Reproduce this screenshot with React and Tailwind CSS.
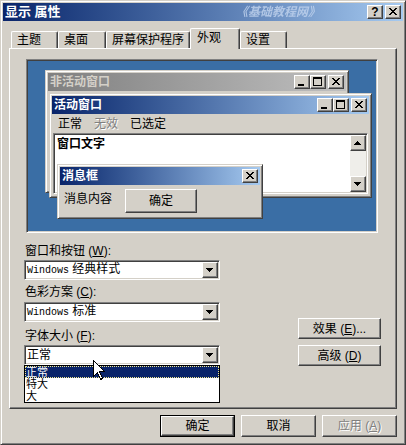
import React from "react";

const face = "bg-[#D4D0C8]";
const raised =
  "border border-t-white border-l-white border-r-[#404040] border-b-[#404040] shadow-[inset_-1px_-1px_0_#808080]";
const frame =
  "border border-t-[#D4D0C8] border-l-[#D4D0C8] border-r-[#404040] border-b-[#404040] shadow-[inset_1px_1px_0_#fff,inset_-1px_-1px_0_#808080]";
const sunken =
  "border border-t-[#808080] border-l-[#808080] border-r-white border-b-white shadow-[inset_1px_1px_0_#404040,inset_-1px_-1px_0_#D4D0C8]";

const xRows = [[0, 1, 6, 7], [1, 2, 5, 6], [2, 3, 4, 5], [3, 4], [2, 3, 4, 5], [1, 2, 5, 6], [0, 1, 6, 7]];

function Glyph({ type }) {
  if (type === "help")
    return <span className="font-['Liberation_Sans',sans-serif] font-bold text-[12px] leading-[12px] text-black">?</span>;
  if (type === "min")
    return (
      <svg width="14" height="12" shapeRendering="crispEdges">
        <rect x="3" y="8" width="6" height="2" fill="#000" />
      </svg>
    );
  if (type === "max")
    return (
      <svg width="14" height="12" shapeRendering="crispEdges">
        <rect x="2" y="1" width="9" height="2" fill="#000" />
        <rect x="2" y="1" width="1" height="9" fill="#000" />
        <rect x="10" y="1" width="1" height="9" fill="#000" />
        <rect x="2" y="9" width="9" height="1" fill="#000" />
      </svg>
    );
  if (type === "close")
    return (
      <svg width="14" height="12" shapeRendering="crispEdges">
        {xRows.map((cols, r) =>
          cols.map((c) => <rect key={r + "-" + c} x={3 + c} y={2 + r} width="1" height="1" fill="#000" />)
        )}
      </svg>
    );
  if (type === "up")
    return (
      <svg width="14" height="14" shapeRendering="crispEdges">
        <rect x="6" y="5" width="1" height="1" fill="#000" />
        <rect x="5" y="6" width="3" height="1" fill="#000" />
        <rect x="4" y="7" width="5" height="1" fill="#000" />
        <rect x="3" y="8" width="7" height="1" fill="#000" />
      </svg>
    );
  return (
    <svg width="14" height="14" shapeRendering="crispEdges">
      <rect x="3" y="5" width="7" height="1" fill="#000" />
      <rect x="4" y="6" width="5" height="1" fill="#000" />
      <rect x="5" y="7" width="3" height="1" fill="#000" />
      <rect x="6" y="8" width="1" height="1" fill="#000" />
    </svg>
  );
}

function CapBtn({ type }) {
  return (
    <div className={`w-[16px] h-[14px] ${face} ${raised} flex items-center justify-center`}>
      <Glyph type={type} />
    </div>
  );
}

function ArrowBtn({ type }) {
  return (
    <div className={`w-[16px] h-[16px] ${face} ${raised} flex items-center justify-center shrink-0`}>
      <Glyph type={type} />
    </div>
  );
}

function MiniWindow({ title, inactive, full, className, children }) {
  const bar = inactive
    ? "bg-gradient-to-r from-[#808080] to-[#C0C0C0] text-[#D4D0C8]"
    : "bg-gradient-to-r from-[#0A246A] to-[#A6CAF0] text-white";
  return (
    <div className={`absolute ${face} ${frame} p-[2px] flex flex-col overflow-hidden ${className}`}>
      <div className={`h-[18px] shrink-0 flex items-center pl-[2px] pr-[2px] ${bar}`}>
        <span className="font-bold text-[12px] leading-[14px]">{title}</span>
        <div className="flex-1" />
        {full ? (
          <>
            <CapBtn type="min" />
            <CapBtn type="max" />
            <div className="w-[2px]" />
            <CapBtn type="close" />
          </>
        ) : (
          <CapBtn type="close" />
        )}
      </div>
      {children}
    </div>
  );
}

function Select({ children }) {
  return (
    <div className={`h-[20px] bg-white ${sunken} p-[1px] flex items-center`}>
      <div className="flex-1 pl-[1px] leading-[14px] whitespace-nowrap">{children}</div>
      <ArrowBtn type="down" />
    </div>
  );
}

function Btn({ children, className = "", disabled }) {
  return (
    <div
      className={`${face} ${raised} flex items-center justify-center text-[12px] ${
        disabled ? "text-[#808080] [text-shadow:1px_1px_0_#fff]" : "text-black"
      } ${className}`}
    >
      {children}
    </div>
  );
}

const Mono = ({ children }) => <span className="font-['Liberation_Mono',monospace] text-[10px]">{children}</span>;
const U = ({ children }) => <span className="underline">{children}</span>;

export default function App() {
  return (
    <div
      className={`relative w-[406px] h-[445px] ${face} ${frame} p-[2px] flex flex-col overflow-hidden font-['Liberation_Sans','Noto_Sans_CJK_SC',sans-serif] text-[12px] text-black`}
    >
      {/* title bar */}
      <div className="h-[18px] shrink-0 flex items-center bg-gradient-to-r from-[#0A246A] to-[#A6CAF0] pl-[2px] pr-[2px]">
        <span className="text-white font-bold text-[13px] leading-[16px]">显示 属性</span>
        <div className="flex-1" />
        <span className="text-[#C2D4EE] font-bold italic text-[12px] leading-[14px] opacity-80">《基础教程网》</span>
        <div className="w-[47px]" />
        <CapBtn type="help" />
        <div className="w-[2px]" />
        <CapBtn type="close" />
      </div>

      {/* tabs */}
      <div className="mt-[7px] h-[20px] pl-[8px] flex items-end shrink-0 relative z-10">
        {[
          ["主题", "w-[47px]"],
          ["桌面", "w-[48px]"],
          ["屏幕保护程序", "w-[84px]"],
        ].map(([t, w]) => (
          <div
            key={t}
            className={`${w} h-[17px] ${face} border-t border-l border-r border-t-white border-l-white border-r-[#404040] shadow-[inset_-1px_0_0_#808080] rounded-t-[2px] pl-[5px] pt-[2px] leading-[13px] text-[12px]`}
          >
            {t}
          </div>
        ))}
        <div
          className={`w-[50px] h-[21px] -mb-[1px] ${face} border-t border-l border-r border-t-white border-l-white border-r-[#404040] shadow-[inset_-1px_0_0_#808080] rounded-t-[2px] pl-[6px] pt-[3px] leading-[13px] text-[12px]`}
        >
          外观
        </div>
        <div
          className={`w-[47px] h-[17px] ${face} border-t border-l border-r border-t-white border-l-white border-r-[#404040] shadow-[inset_-1px_0_0_#808080] rounded-t-[2px] pl-[5px] pt-[2px] leading-[13px] text-[12px]`}
        >
          设置
        </div>
      </div>

      {/* panel */}
      <div
        className={`ml-[6px] w-[388px] h-[361px] shrink-0 ${face} border border-t-white border-l-white border-r-[#404040] border-b-[#404040] shadow-[inset_-1px_-1px_0_#808080] flex flex-col`}
      >
        {/* preview */}
        <div className={`ml-[16px] mt-[10px] w-[352px] h-[174px] ${sunken} p-[1px]`}>
          <div className="relative w-full h-full bg-[#3A6EA5]">
            <MiniWindow title="非活动窗口" inactive full className="left-[17px] top-[9px] w-[304px] h-[123px]" />
            <MiniWindow title="活动窗口" full className="left-[21px] top-[32px] w-[323px] h-[105px]">
              <div className="h-[19px] shrink-0 flex items-center gap-[12px] pl-[6px] text-[12px] leading-[14px]">
                <span>正常</span>
                <span className="text-[#808080] [text-shadow:1px_1px_0_#fff]">无效</span>
                <span>已选定</span>
              </div>
              <div className={`flex-1 mx-[1px] mb-[1px] bg-white ${sunken} p-[1px] flex`}>
                <div className="flex-1 pl-[2px] pt-[2px] font-bold leading-[14px]">窗口文字</div>
                <div className="w-[16px] flex flex-col bg-[#EFEEEA]">
                  <ArrowBtn type="up" />
                  <div className="flex-1" />
                  <ArrowBtn type="down" />
                </div>
              </div>
            </MiniWindow>
            <MiniWindow title="消息框" className="left-[29px] top-[103px] w-[206px] h-[55px]">
              <div className="flex items-start pt-[4px] pl-[4px]">
                <span className="mt-[3px] leading-[14px]">消息内容</span>
                <Btn className="ml-[13px] w-[72px] h-[24px]">确定</Btn>
              </div>
            </MiniWindow>
          </div>
        </div>

        {/* options */}
        <div className="flex mt-[12px]">
          <div className="ml-[14px] w-[196px] flex flex-col">
            <div className="h-[13px] leading-[13px] pl-[1px]">
              窗口和按钮 (<U>W</U>):
            </div>
            <div className="mt-[2px]">
              <Select>
                <Mono>Windows</Mono> 经典样式
              </Select>
            </div>
            <div className="mt-[6px] h-[13px] leading-[13px] pl-[1px]">
              色彩方案 (<U>C</U>):
            </div>
            <div className="mt-[3px]">
              <Select>
                <Mono>Windows</Mono> 标准
              </Select>
            </div>
            <div className="mt-[8px] h-[13px] leading-[13px] pl-[1px]">
              字体大小 (<U>F</U>):
            </div>
            <div className="mt-[2px]">
              <Select>正常</Select>
            </div>
            <div className="h-[38px] bg-white border border-black flex flex-col text-[11px] leading-[12px]">
              <div className="h-[12px] overflow-hidden bg-[#0A246A] text-white outline outline-1 outline-dotted outline-[#F0E68C] -outline-offset-1 pl-[1px]">
                正常
              </div>
              <div className="h-[12px] overflow-hidden pl-[1px]">特大</div>
              <div className="h-[12px] overflow-hidden pl-[1px]">大</div>
            </div>
          </div>
          <div className="ml-[78px] mt-[73px] w-[83px] flex flex-col gap-[6px]">
            <Btn className="h-[21px]">
              效果 (<U>E</U>)...
            </Btn>
            <Btn className="h-[21px]">
              高级 (<U>D</U>)
            </Btn>
          </div>
        </div>
      </div>

      {/* bottom buttons */}
      <div className="mt-[6px] flex justify-end gap-[6px] pr-[6px]">
        <div className="border border-black">
          <Btn className="w-[73px] h-[20px]">确定</Btn>
        </div>
        <Btn className="w-[75px] h-[22px]">取消</Btn>
        <Btn disabled className="w-[75px] h-[22px]">
          应用 (<U>A</U>)
        </Btn>
      </div>

      {/* mouse cursor */}
      <svg className="absolute left-[92px] top-[359px]" width="13" height="21" viewBox="0 0 13 21" shapeRendering="crispEdges">
        <path d="M0.5 0.5 L0.5 16.5 L4.5 12.5 L7.5 19.5 L9.5 18.5 L6.5 11.5 L11.5 11.5 Z" fill="#fff" stroke="#000" strokeWidth="1" />
      </svg>
    </div>
  );
}
